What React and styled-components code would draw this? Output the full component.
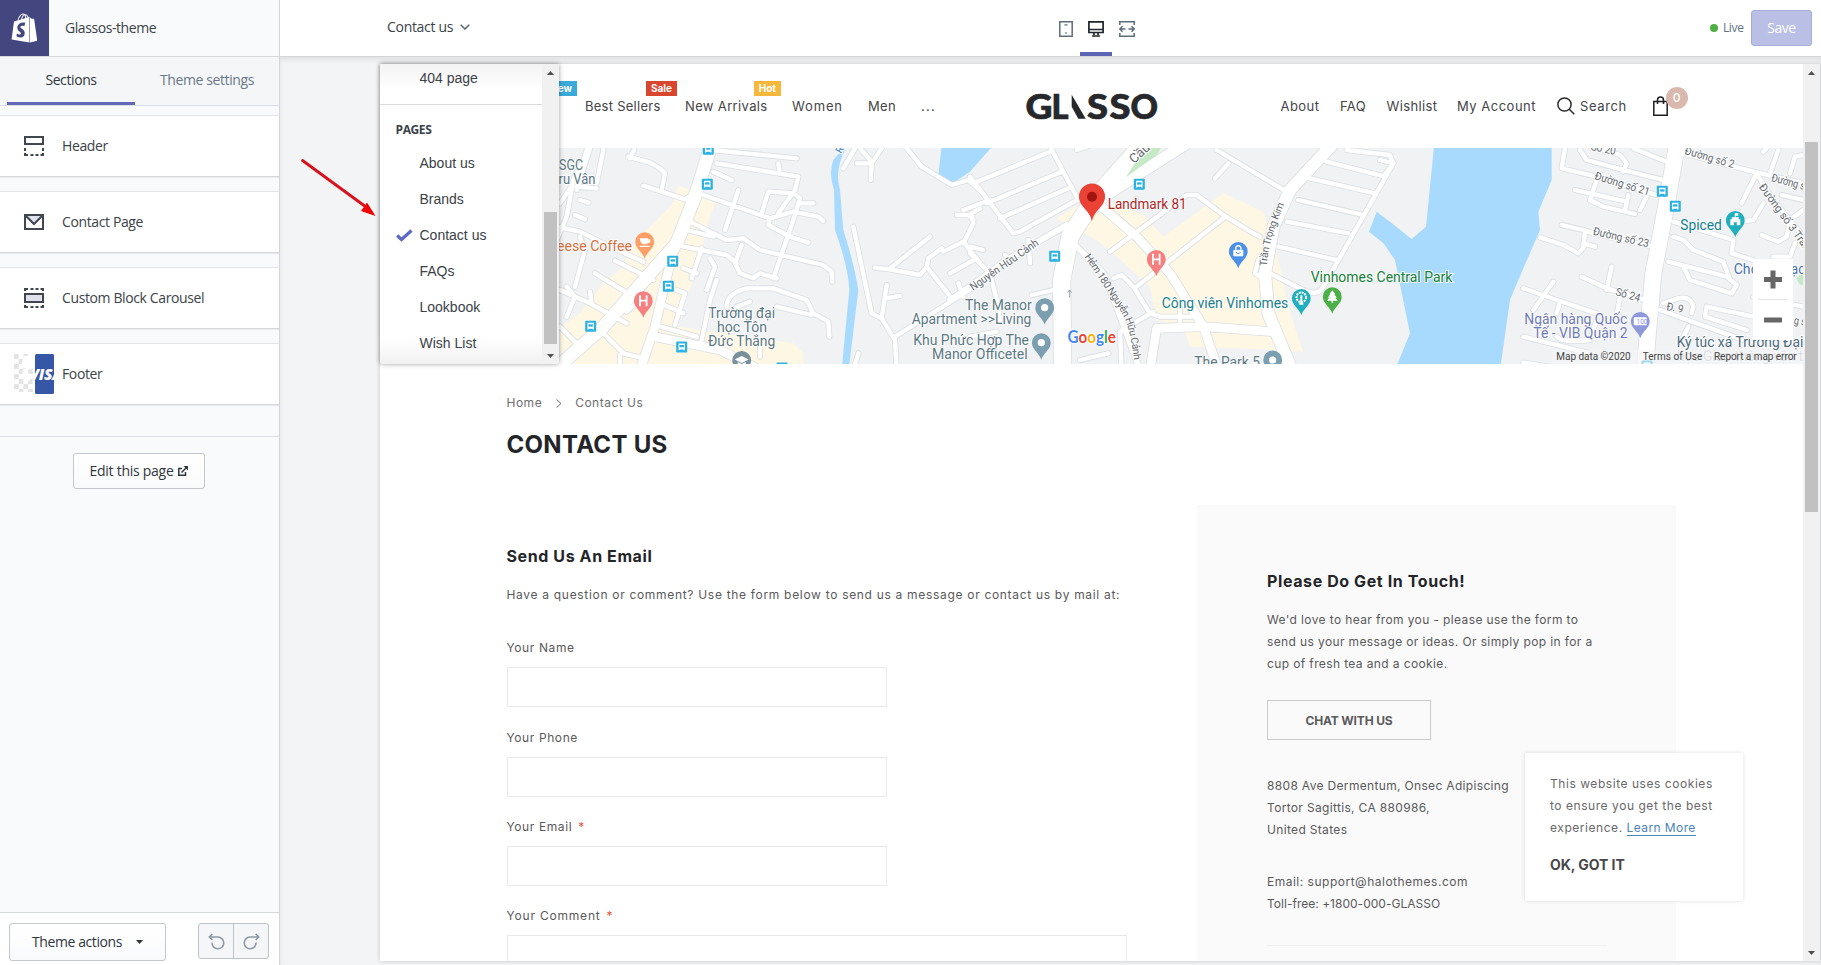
import React from "react";
import styled, { createGlobalStyle } from "styled-components";
import { FaShopify } from "react-icons/fa";

const ui = `"Open Sans", "Noto Sans", sans-serif`;
const shop = `Inter, Lato, sans-serif`;

const Global = createGlobalStyle`
  * { box-sizing: border-box; }
  body { margin: 0; background: #f4f6f8; overflow: hidden; }
  button { font: inherit; padding: 0; margin: 0; cursor: pointer; }
  h1, h2, p, ul { margin: 0; padding: 0; }
`;

/* ---------- editor shell ---------- */

const Shell = styled.div`
  display: grid;
  grid-template-columns: 280px 1fr;
  grid-template-rows: 965px;
  width: 1821px;
  height: 965px;
  overflow: hidden;
  font: 14px/20px ${ui};
  letter-spacing: -0.38px;
  color: #3b4248;
`;
const Sidebar = styled.aside`
  display: flex;
  flex-direction: column;
  border-right: 1px solid #d3d6da;
  background: #f9fafc;
`;
const Brand = styled.div`
  display: flex;
  align-items: center;
  gap: 16px;
  height: 57px;
  border-bottom: 1px solid #d6d8dc;
  letter-spacing: -0.43px;
`;
const BrandMark = styled.div`
  display: grid;
  place-items: center;
  width: 49px;
  height: 56px;
  background: #43467f;
  color: #fff;
  svg { width: 27px; height: 30px; }
`;
const Tabs = styled.div`
  display: flex;
  height: 49px;
  padding-left: 7px;
  background: #f4f6f8;
  border-bottom: 1px solid #d9dfe8;
`;
const Tab = styled.button`
  flex: none;
  width: ${(p) => p.$w}px;
  height: 48px;
  border: 0;
  border-bottom: 3px solid ${(p) => (p.$on ? "#6369b5" : "transparent")};
  background: none;
  letter-spacing: -0.4px;
  color: ${(p) => (p.$on ? "#31373d" : "#6b7885")};
`;
const Cards = styled.div`
  display: flex;
  flex-direction: column;
  gap: 14px;
  padding: 9px 0 31px;
  border-bottom: 1px solid #dcdfe4;
`;
const Card = styled.div`
  display: flex;
  align-items: center;
  gap: 8px;
  height: 62px;
  padding-left: 14px;
  background: #fff;
  border-top: 1px solid #e3e5e9;
  border-bottom: 1px solid #d5d7da;
  box-shadow: 0 1px 1px rgba(0, 0, 0, 0.06);
`;
const Thumb = styled.div`
  display: grid;
  place-items: center;
  width: 40px;
  height: 40px;
`;
const EditWrap = styled.div`
  display: flex;
  justify-content: center;
  flex: 1;
  padding: 16px 1px 0 0;
`;
const EditorButton = styled.button`
  display: flex;
  align-items: center;
  justify-content: center;
  gap: ${(p) => p.$gap}px;
  width: ${(p) => p.$w}px;
  height: ${(p) => p.$h}px;
  border: 1px solid #c3c8cf;
  border-radius: 3px;
  background: linear-gradient(#fff, #f9fafb);
  letter-spacing: ${(p) => p.$ls}px;
  color: #31373d;
`;
const Footer = styled.div`
  display: flex;
  justify-content: space-between;
  height: 53px;
  padding: 10px 10px 0 9px;
  background: #fff;
  border-top: 1px solid #d5d8dc;
`;
const History = styled.div`
  display: flex;
  width: 71px;
  height: 36px;
  border: 1px solid #bcc3cc;
  border-radius: 3px;
  background: #f4f6f8;
`;
const HistoryButton = styled.button`
  flex: 1;
  display: grid;
  place-items: center;
  border: 0;
  background: none;
  & + & { border-left: 1px solid #bcc3cc; }
`;

const Workspace = styled.div`
  display: flex;
  flex-direction: column;
  min-width: 0;
  min-height: 0;
`;
const TopBar = styled.div`
  display: grid;
  grid-template-columns: 778px 1fr auto;
  flex: none;
  height: 57px;
  padding: 0 9px 0 0;
  background: #fff;
  border-bottom: 1px solid #d3d5d8;
`;
const PagePicker = styled.div`
  display: flex;
  align-items: center;
  gap: 7px;
  height: 54px;
  padding-left: 107px;
  letter-spacing: -0.3px;
`;
const Devices = styled.div`
  display: flex;
  margin-left: -7px;
`;
const Device = styled.button`
  display: grid;
  place-items: center;
  width: ${(p) => p.$w}px;
  height: 56px;
  padding-top: 5px;
  border: 0;
  border-bottom: 4px solid ${(p) => (p.$on ? "#5c64b4" : "transparent")};
  background: none;
`;
const SaveArea = styled.div`
  display: flex;
  align-items: center;
  height: 56px;
`;
const Live = styled.span`
  display: flex;
  align-items: center;
  gap: 5px;
  margin-right: 7.5px;
  font-size: 12px;
  color: #5c7480;
  &::before {
    content: "";
    width: 8px;
    height: 8px;
    border-radius: 50%;
    background: #50b043;
  }
`;
const Save = styled.button`
  width: 61px;
  height: 36px;
  border: 1px solid #a7aedf;
  border-radius: 3px;
  background: #babfe6;
  color: #fff;
  letter-spacing: -0.5px;
`;
const Stage = styled.div`
  position: relative;
  flex: 1;
  display: flex;
  min-height: 0;
  padding: 7px 1px 4px 100px;
  background: #f3f4f6;
  box-shadow: inset 0 3px 5px rgba(0, 0, 0, 0.08);
`;
const Preview = styled.div`
  flex: 1;
  display: flex;
  min-width: 0;
  min-height: 0;
  background: #fff;
  box-shadow: 0 0 4px rgba(0, 0, 0, 0.22);
`;
const Page = styled.div`
  width: 1423px;
  overflow: hidden;
  font: 12px/22px ${shop};
  letter-spacing: 0;
  color: #59595b;
`;

/* ---------- scrollbars ---------- */

const Track = styled.div`
  display: flex;
  flex-direction: column;
  align-items: center;
  width: 17px;
  background: #f1f1f1;
`;
const ArrowBox = styled.div`
  display: grid;
  place-items: center;
  height: 17px;
  width: 17px;
`;
const Grip = styled.div`
  width: 13px;
  margin-top: ${(p) => p.$top}px;
  margin-bottom: auto;
  height: ${(p) => p.$h}px;
  background: #c1c1c1;
`;
const Scrollbar = ({ top, height }) => (
  <Track>
    <ArrowBox><svg width="7" height="4"><path d="M0 4 3.500 0 7 4Z" fill="#505050" /></svg></ArrowBox>
    <Grip $top={top} $h={height} />
    <ArrowBox><svg width="7" height="4"><path d="M0 0 3.500 4 7 0Z" fill="#505050" /></svg></ArrowBox>
  </Track>
);

/* ---------- page menu ---------- */

const Menu = styled.div`
  position: absolute;
  left: 100px;
  top: 7px;
  display: flex;
  width: 179px;
  height: 300px;
  background: #fff;
  border-radius: 0 0 3px 3px;
  box-shadow: 0 0 5px rgba(0, 0, 0, 0.38);
  font: 14px/36px "Liberation Sans", Arial, sans-serif;
  letter-spacing: 0;
  overflow: hidden;
`;
const MenuList = styled.div`
  flex: 1;
  background: linear-gradient(#f3f3f4, #fff 26px, #fff 274px, #f1f1f2);
`;
const MenuItem = styled.div`
  display: flex;
  align-items: center;
  height: 36px;
  padding-left: 16px;
`;
const MenuTop = styled(MenuItem)`
  height: 41px;
  padding-bottom: 12px;
  border-bottom: 1px solid #d8dadd;
`;
const MenuMark = styled.span`
  display: flex;
  width: 23.5px;
`;
const MenuTitle = styled.div`
  padding: 16px 0 6px 15.5px;
  font: 700 12px/18px ${ui};
  letter-spacing: -0.38px;
`;

/* ---------- storefront ---------- */

const StoreHeader = styled.header`
  position: relative;
  display: grid;
  grid-template-columns: 647px 253.5px 1fr;
  align-items: center;
  height: 84px;
  background: #fff;
  box-shadow: 0 1px 3px rgba(0, 0, 0, 0.15);
  font-size: 13px;
`;
const Nav = styled.nav`
  display: flex;
  align-items: center;
  gap: ${(p) => p.$gap}px;
  padding-left: ${(p) => p.$pl}px;
`;
const NavItem = styled.span`
  position: relative;
  width: ${(p) => p.$w}px;
  white-space: nowrap;
  letter-spacing: ${(p) => p.$ls}px;
  color: #444446;
`;
const Tag = styled.span`
  position: absolute;
  right: -${(p) => p.$out}px;
  top: -14px;
  height: 15px;
  padding: 0 5px;
  font: 700 10px/15px ${shop};
  letter-spacing: 0;
  color: #fff;
  background: ${(p) => p.$c};
`;
const Bag = styled.span`
  position: relative;
  display: flex;
  margin-left: 5px;
`;
const Count = styled.span`
  position: absolute;
  left: 13px;
  top: -9px;
  width: 22px;
  height: 22px;
  border-radius: 50%;
  background: #d9b9ad;
  color: #fff;
  font: 500 12px/22px ${shop};
  text-align: center;
`;
const SearchIcon = styled.span`
  display: flex;
  margin-right: -15px;
`;

const MapBox = styled.div`
  position: relative;
  height: 216px;
  background: #f0f2f4;
  svg { display: block; }
`;
const ZoomBox = styled.div`
  position: absolute;
  left: 1373px;
  top: 111px;
  width: 40px;
  height: 81px;
  background: #fff;
`;

const Content = styled.main`padding: 29px 127px 0 126.5px;`;
const Crumbs = styled.div`
  display: flex;
  align-items: center;
  gap: 13.5px;
  line-height: 20px;
  letter-spacing: 0.5px;
  color: #6e6e70;
`;
const Title = styled.h1`
  margin-top: 17px;
  font-size: 24px;
  line-height: 30px;
  letter-spacing: 0.3px;
  color: #232529;
`;
const Columns = styled.div`
  display: grid;
  grid-template-columns: 620px 479px;
  gap: 70.5px;
  margin-top: 45px;
`;
const Form = styled.section`padding-top: 39px;`;
const Heading = styled.h2`
  font-size: 16px;
  line-height: 24px;
  letter-spacing: 0.6px;
  white-space: nowrap;
  color: #232529;
`;
const Text = styled.p`
  margin-top: ${(p) => p.$mt}px;
  letter-spacing: ${(p) => p.$ls}px;
  white-space: nowrap;
`;
const Field = styled.div`
  display: flex;
  flex-direction: column;
  gap: 9px;
  margin-top: ${(p) => p.$mt}px;
`;
const Label = styled.label`
  line-height: 20px;
  letter-spacing: ${(p) => p.$ls || 0.6}px;
  em { margin-left: 6px; color: #e5533d; font-style: normal; }
`;
const Input = styled.div`
  width: ${(p) => p.$w}px;
  height: ${(p) => p.$h}px;
  border: 1px solid #e9e9e9;
  background: #fff;
`;
const Panel = styled.aside`
  height: 456px;
  padding: 64px 69px 0 70px;
  background: #fafafa;
`;
const Chat = styled.button`
  width: 164px;
  height: 40px;
  margin-top: 25px;
  padding-top: 2px;
  border: 1px solid #cbcbcb;
  background: none;
  font: 700 12px/20px ${shop};
  letter-spacing: -0.16px;
  color: #5a5a5c;
`;
const Rule = styled.div`
  margin-top: 30px;
  height: 1px;
  background: #f1f1f1;
`;
const Cookie = styled.div`
  position: absolute;
  left: 1245px;
  top: 696px;
  width: 218px;
  height: 148px;
  padding: 20px 25px;
  border-radius: 2px;
  background: rgba(255, 255, 255, 0.96);
  box-shadow: 0 0 4px rgba(0, 0, 0, 0.13);
  font: 12px/22px ${shop};
  letter-spacing: ${0.55}px;
  white-space: nowrap;
  color: #68686a;
  a { letter-spacing: 0.4px; color: #4a84b8; border-bottom: 1px solid #4a84b8; }
  strong { display: block; margin-top: 15px; font-size: 14px; letter-spacing: -0.05px; color: #47474a; }
`;
const Pointer = styled.svg`
  position: absolute;
  left: 20px;
  top: 98px;
`;

/* ---------- icons ---------- */

const HeaderIcon = () => (
  <svg width="20" height="20" fill="none" stroke="#41474e" strokeWidth="2">
    <path d="M1 1h18v7H1z" fill="#fff" />
    <path d="M1 12v3M19 12v3" />
    <path d="M1 17v2h3M6.500 19h3M11.500 19h3M16.500 19H19v-2" />
  </svg>
);
const MailIcon = () => (
  <svg width="20" height="16" fill="none" stroke="#41474e" strokeWidth="2">
    <path d="M2 2l8 8 8-8Z" fill="#dfe1ec" stroke="none" />
    <path d="M1 1h18v14H1zM2 2l8 8 8-8" />
  </svg>
);
const BlockIcon = () => (
  <svg width="20" height="20" fill="none" stroke="#41474e" strokeWidth="2">
    <path d="M1 3V1h3M6.500 1h3M11.500 1h3M16.500 1H19v2M1 17v2h3M6.500 19h3M11.500 19h3M16.500 19H19v-2" />
    <path d="M1 6h18v8H1z" fill="#dfe1ec" />
  </svg>
);
const FooterThumb = () => (
  <svg width="40" height="40">
    <defs>
      <pattern id="check" width="9.4" height="10" patternUnits="userSpaceOnUse">
        <path d="M0 0h4.7v5H0zM4.7 5h4.7v5H4.7z" fill="#e4e4e4" />
      </pattern>
      <clipPath id="visa"><rect x="21" width="19" height="40" rx="1.5" /></clipPath>
    </defs>
    <rect width="19" height="38" fill="url(#check)" />
    <path d="M10 2h9v12l-5 2-7-4zM8 17l8 3v7l-7-3z" fill="#fff" />
    <rect x="21" width="19" height="40" rx="1.5" fill="#3656a6" />
    <text x="15.500" y="25.500" clipPath="url(#visa)" fill="#fff" fontFamily="Open Sans" fontWeight="800" fontStyle="italic" fontSize="16" textLength="33" lengthAdjust="spacingAndGlyphs">VISA</text>
  </svg>
);
const ExternalIcon = () => (
  <svg width="10" height="10" fill="none" stroke="#31373d" strokeWidth="1.500">
    <path d="M4 2.500H.8v6.700h6.700V6M3.500 6.500 8.500 1.500" />
    <path d="M5.500 0H10v4.500Z" fill="#31373d" stroke="none" />
  </svg>
);
const UndoIcon = ({ flip }) => (
  <svg width="17" height="17" viewBox="0 0 17 17" fill="none" stroke="#8d9aa8" strokeWidth="1.600">
    <path transform={flip ? "matrix(-1 0 0 1 17 0)" : undefined} d="M1.300 4H10A5.900 5.900 0 1 1 4 9.600M4.300 1 1.300 4l3 3" />
  </svg>
);
const TabletIcon = () => (
  <svg width="14" height="16" fill="none" stroke="#5f6e7b" strokeWidth="1.500">
    <path d="M.8.8h12.400v14.400H.8z" />
    <path d="M5.500 3.800h3M6.300 12h1.400" strokeWidth="1.300" />
  </svg>
);
const DesktopIcon = () => (
  <svg width="16" height="16" fill="none" stroke="#1f262d" strokeWidth="1.700">
    <path d="M.9.9h14.200v10.600H.9zM1 8.500h14M6 11.500v2.500M10 11.500v2.500M4 15h8" />
  </svg>
);
const WideIcon = () => (
  <svg width="16" height="16" fill="none" stroke="#5f6e7b" strokeWidth="1.500">
    <path d="M.8 4V.8h14.400V4M.8 12v3.200h14.400V12M1 8h5.500M9.500 8H15M3.500 5.300.9 8l2.600 2.700M12.500 5.300 15.100 8l-2.600 2.700" />
  </svg>
);

const LogoMark = styled.svg`
  overflow: visible;
`;
const Logo = () => (
  <LogoMark width="130" height="28" viewBox="1027 91.500 130 28" fill="#26282b" fontFamily="Lato" fontWeight="900" fontSize="34">
    {[["G", 1025.500, 27], ["L", 1051.500, 17], ["S", 1087, 21], ["S", 1109.500, 21], ["O", 1130.500, 27.500]].map(([c, x, w]) => (
      <text key={x} x={x} y="118" textLength={w} lengthAdjust="spacingAndGlyphs" stroke="#26282b" strokeWidth=".7">{c}</text>
    ))}
    <path d="M1071.700 94.300 1085.700 118.200h-7.400l-6.600-12z" />
  </LogoMark>
);

/* ---------- map ---------- */

const west = "translate(560 140) scale(.33333)";
const mid = "translate(970 140) scale(.33333)";
const east = "translate(1390 140) scale(.33333)";

const roads = [
  [west, 13, "M210 55 222 30M205 50 270 68 300 85 315 100 306 145M250 137 375 178 395 165M0 262 60 275 150 320 250 365M70 60 40 120 20 230-10 300M90 25 50 150M130 30 110 130M50 140 110 145M60 180 85 188M45 225 75 238M0 190 60 100 80 30M60 290 75 330 45 440M165 362 280 420M105 400 195 455"],
  [west, 13, "M455 30 710 55M470 70 715 110 705 150 655 220M655 70 658 95M460 95 515 120M430 165 630 235 700 215 775 230 790 243M535 150 495 270M605 220 625 155 700 160 720 175 700 240 640 415M720 190 760 190M630 235 625 255 690 290 745 308M390 245 500 300 550 295 600 330 790 375 815 395 817 425M380 270 460 290M370 320 500 345 530 370M545 315 525 370 540 400 580 415 600 400 650 415M425 325 395 415M450 355 465 380 440 450M370 385 410 400M470 420 450 480 425 600M350 450 375 460 345 555"],
  [west, 13, "M500 500Q500 460 560 445L640 445 740 480 760 520 805 545 808 590M650 500 755 525M300 490 370 520M285 555 410 590M530 500 570 485M880 260 935 520 965 535 1005 600 1010 690M980 435 965 535M975 475 1020 468M895 640 880 690M1005 590 1180 480 1260 430M945 383 990 388 1080 405 1100 380 1175 475M990 385 1110 290M1100 380 1105 355 1145 325M1150 335 1210 305 1260 370M1190 225 1235 225 1240 250 1215 300M1170 400 1250 355M1260 205 1235 220M1195 430 1210 470M1040 25 1085 80 1175 135 1225 120 1260 150M885 25 850 85M890 70 935 70 965 25M935 70 932 120M900 25 935 65M0 450 90 490 200 550M90 455 95 490M20 440 45 470 20 530M0 560 60 620M120 570 190 640 250 655M180 645 180 690M200 515 240 480M600 650 600 620"],
  [mid, 13, "M10 130 240 35M50 190 275 95M90 235 305 140M0 110 130 280 150 275 330 175M-20 210 60 180M240 20 325 180M0 320 40 330M0 340 60 400 80 480 90 540M0 230 10 240M175 300 180 370M105 345 115 360M185 465 250 450M0 590 80 575M330 660 415 640M430 415 455 405 490 440 540 520 570 530 690 530M550 515 450 575 455 690M500 440 550 400 760 235M630 505 630 545M420 335 650 165 680 165 760 225 850 280 870 290M740 30 950 155M775 70 735 115M320 30 350 20"],
  [mid, 13, "M1130 30 1260 45 1270 70 1060 440Q1045 470 1000 450L900 400M1070 65 1245 110M1020 115 1215 160M985 180 1180 225M950 245 1135 280M925 320 1100 360M865 360 855 400 885 420"],
  [east, 13, "M525 25 515 85 600 105 800 165M570 30 590 60 700 90 820 120M610 20 690 45 710 70 700 95M730 25 830 65M555 150 600 160 710 185M620 120 600 180 640 200 735 222M715 165 705 210M770 170 750 210M515 255 580 270 610 280 790 320M450 292 520 315 565 340 580 325 585 275M580 310 615 320M665 380 650 450M575 410 650 445 800 490M400 445 500 480 620 520M490 425 430 510M510 485 500 520M400 590 600 640M690 470 680 530M400 668 480 680M500 590Q520 610 600 600L620 540M-30 60 10 70-20 110"],
  [east, 13, "M880 40 1090 95 1240 130M1165 30 1140 100M1200 100 1215 50 1240 45M1120 35 1130 25M1100 100 1055 190M1105 110 1150 180 1240 290M1175 165 1240 180M1120 190 1090 240 1050 245M850 245 1030 300 1025 340 1090 360M850 290 880 300 910 330 1000 365 1020 420M835 365 1010 410 1040 435 1025 460 900 420 880 380M1115 285 1165 305 1190 290 1200 240 1240 210M1150 350 1200 350 1215 310M820 490 850 480Q900 460 910 500L905 520M810 510 920 550 1060 600M950 500 1090 530M950 500 945 530 1070 570M1090 470 1240 500M895 560 880 590"],
  [mid, 17, "M-60 480 0 440 110 360 290 255M320 320 400 400 440 500 510 690"],
  [west, 26, "M345 320 315 430 285 560 240 690M285 590 480 630 600 690"],
  [mid, 26, "M395 200 500 290 600 400 700 560 745 690M540 690 560 565 700 560 910 575"],
  [mid, 36, "M1090 10 960 150 910 260 885 400 895 520 965 690"],
  [west, 38, "M455 10 405 170 350 310 130 560-40 710"],
  [mid, 52, "M530 0 370 180 300 290 275 420 278 700"],
  [mid, 34, "M650 10 400 170 330 250"],
  [east, 48, "M862 10 832 180 790 400 763 700"],
];

const Pin = ({ x, y, c, children }) => (
  <g transform={`translate(${x} ${y})`}>
    <path d="M0 17C-2 10-9.400 7-9.400 0A9.400 9.400 0 1 1 9.400 0C9.400 7 2 10 0 17Z" fill={c} />
    {children || <circle r="3.600" fill="#fff" />}
  </g>
);
const Hospital = () => <path d="M-3.300-5.500V5.500M3.300-5.500V5.500M-3.300 0H3.300" stroke="#fff" strokeWidth="1.800" />;
const stops = [[708.300, 149.300], [707.300, 184.300], [672.700, 261.300], [668.300, 286.300], [590.700, 326.300], [681.700, 347], [782, 368], [1139.300, 184.300], [1054.700, 256.300], [1662.300, 191.300], [1675.300, 206.300], [1647, 366]];
const Stop = ({ at }) => (
  <g transform={`translate(${at[0]} ${at[1]})`}>
    <rect x="-5.500" y="-5.500" width="11" height="11" rx="1" fill="#2cb1e1" />
    <path d="M-3.200-3.500H3.200V3.300H2V2.500H-2V3.300H-3.200Z" fill="#fff" />
    <path d="M-2.200-2H2.200V.3H-2.200Z" fill="#2cb1e1" />
  </g>
);

const slate = "#5b7883";
/* text, x, baseline, length, colour */
const places = [
  ["SGC", 559, 170, 24, slate], ["ru Vân", 558.500, 184, 37, slate], ["Cheese Coffee", 540, 251, 92, "#d4703f"],
  ["Trường đại", 708.300, 318, 66.700, slate], ["học Tôn", 717, 332, 50, slate], ["Đức Thắng", 708, 346, 67.300, slate],
  ["The Manor", 965, 310, 66.700, slate], ["Apartment >>Living", 911.700, 324.300, 119.600, slate],
  ["Khu Phức Hợp The", 913.300, 345, 115.700, slate], ["Manor Officetel", 932, 359, 95.700, slate],
  ["Landmark 81", 1107.700, 209, 79, "#b0261f"], ["Công viên Vinhomes", 1161.700, 308, 126.600, "#1a7f8e"],
  ["Vinhomes Central Park", 1310.700, 282, 141.600, "#188038"], ["The Park 5", 1194.300, 367, 65.700, slate],
  ["Spiced", 1680.300, 230, 41.400, "#12808f"], ["Ngân hàng Quốc", 1524.300, 324, 103, "#6f7bb5"],
  ["Tế - VIB Quận 2", 1533.300, 338, 94.400, "#6f7bb5"], ["Chợ", 1733.700, 274, 25, "#4a72b0"], ["ạc", 1791, 274, 14, "#4a72b0"],
  ["Ký túc xá Trường Đại", 1676.700, 347, 126.600, "#4f6b7c"], ["học Giao thông vận t", 1677, 361, 126, "#b9c1c7"],
];
/* text, x, y, length, angle */
const streets = [
  ["Nguyễn Hữu Cảnh", 973, 291, 81, -35], ["Số 20", 1590.500, 150, 25, 11], ["Đường số 21", 1594, 179, 57, 17],
  ["Đường số 2", 1684, 154, 51, 16], ["Đường số", 1770.700, 181, 40, 15], ["Đường số 3 Trần", 1758.500, 187, 80, 54],
  ["Đường số 23", 1592.500, 234.500, 57, 13], ["Số 24", 1615, 295, 25, 16], ["Đ. 9", 1666, 310, 17, 10],
  ["g s", 1793.500, 324, 12, 8],
];

const CityMap = () => (
  <svg width="1423" height="216" viewBox="380 148 1423 216" fontFamily="Roboto">
    <defs>
      <path id="alley" d="M343 350C390 420 410 450 440 495S480 560 496 690" />
      <path id="avenue" d="M890 380C895 310 915 260 945 187" />
    </defs>
    <g fill="#fef7e4">
      <path transform={west} d="M355 135 420 165 465 190 440 260 410 400 380 470 355 560 560 590 700 610 730 640V690H0V560L60 520 130 430 180 390 230 300 340 190Z" />
      <path transform={mid} d="M260 235 340 185 400 180 520 225 580 290 760 160 880 215 930 380 960 520 1000 635 800 625 660 620 640 560 560 540 540 440 430 340 380 300Z" />
    </g>
    <path transform={mid} d="M540 230 660 180 690 200 580 290Z" fill="#f0f2f4" />
    <g fill="#a8dafd">
      <path transform={west} d="M855 20 820 60Q805 100 822 150L825 270Q865 380 868 450L845 690H866L895 450Q882 370 850 270L840 150Q822 90 858 24Z" />
      <path transform={west} d="M1145 20H1296L1230 95 1175 132 1135 105Z" />
      <path transform={east} d="M132 20H485V120L445 215 450 270 385 420 360 480 330 690H15L60 580 15 360-20 310-63 275-40 215 0 245 65 297 108 260Z" />
    </g>
    <g fill="none" strokeLinejoin="round" strokeLinecap="round">
      <g stroke="#dcdfe3">
        {roads.map(([t, w, d], i) => <path key={i} transform={t} d={d} strokeWidth={w + 5} />)}
      </g>
      <g stroke="#fff">
        {roads.map(([t, w, d], i) => <path key={i} transform={t} d={d} strokeWidth={w} />)}
      </g>
    </g>
    <path transform={mid} d="M525 20H575L560 45 468 112Z" fill="#c5e8c5" />
    <path transform={east} d="M1220 415q10-15 25-10v30q-20 5-25-20" fill="#c5e8c5" />
    <path transform={mid} d="M299 473V450M293 458 299 450 305 458" stroke="#9aa0a6" strokeWidth="3" fill="none" />
    {stops.map((s) => <Stop key={s.join()} at={s} />)}

    <g fill="#62686e" fontSize="11" stroke="#fff" strokeWidth="2" paintOrder="stroke">
      {streets.map(([t, x, y, w, a]) => (
        <text key={t} transform={`translate(${x} ${y}) rotate(${a})`} textLength={w} lengthAdjust="spacingAndGlyphs">{t}</text>
      ))}
      <text transform="translate(1134 164) rotate(-42)" fontSize="13">Cầu</text>
      <text transform="translate(841 154) rotate(-60)" fill="#3b78c9" fontSize="10">Rạ</text>
      <g transform={mid} fontSize="31" strokeWidth="5">
        <text><textPath href="#alley" textLength="350">Hẻm 180 Nguyễn Hữu Cảnh</textPath></text>
        <text><textPath href="#avenue" textLength="196">Trần Trọng Kim</textPath></text>
      </g>
    </g>

    <Pin x={644.700} y={241.700} c="#ff9e67"><path d="M-5-3.500H3.500V-2.500H5.500V1H3.300Q2.500 2.500 0 2.500-4.500 2.500-5-3.500ZM-5 4H5V5.200H-5Z" fill="#fff" /></Pin>
    <Pin x={643.300} y={300.700} c="#f5807f"><Hospital /></Pin>
    <Pin x={741.700} y={360.500} c="#78909c"><path d="M-7-1 0-4.500 7-1 0 2.500ZM-4 1.500V5H4V1.500L0 3.500Z" fill="#fff" /></Pin>
    <Pin x={1156.300} y={259.300} c="#f5807f"><Hospital /></Pin>
    <Pin x={1238.300} y={251.300} c="#4a90e8"><path d="M-4.500-1H4.500V4.500H-4.500Z" fill="#fff" stroke="#fff" /><path d="M-2.500-1.500V-3a2.500 2.500 0 0 1 5 0v1.500" fill="none" stroke="#fff" strokeWidth="1.400" /><path d="M-2.200.8Q0 4 2.200.8" fill="none" stroke="#4a90e8" /></Pin>
    <Pin x={1301.300} y={298.300} c="#22afbd"><circle r="4.800" cy="-1" fill="none" stroke="#fff" strokeWidth="2" strokeDasharray="2 .8" /><path d="M0 6V-3M-2 5.500H2" stroke="#fff" strokeWidth="2" /></Pin>
    <Pin x={1332.300} y={296.700} c="#4caf47"><path d="M0-6.500 3-2.500H2L4.500 1H3L5.500 4H.8V6H-.8V4H-5.500L-3 1H-4.500L-2-2.500H-3Z" fill="#fff" /></Pin>
    <Pin x={1044.700} y={307.700} c="#7b9eb0" />
    <Pin x={1041.300} y={342.700} c="#7b9eb0" />
    <Pin x={1272.700} y={360} c="#7b9eb0" />
    <Pin x={1735.300} y={220.300} c="#22afbd"><path d="M-5 5V-1H-3.500V-3H-.6V-7H3V-4.500H.5V-3H3.500V-1H5V5H1.500V2H-1.500V5Z" fill="#fff" /></Pin>
    <Pin x={1640.300} y={321.300} c="#8f98da"><rect x="-6.500" y="-4" width="13" height="8" rx="1" fill="#fff" /><text x="-3.800" y="3" fontSize="6.500" fill="#8f98da">100</text></Pin>
    <path d="M1092 221.500C1090 210 1079 207 1079 196.500A13 13 0 1 1 1105 196.500C1105 207 1094 210 1092 221.500Z" fill="#ea4335" />
    <circle cx="1092" cy="196.700" r="5" fill="#a31512" />

    <g fontSize="14" stroke="#fff" strokeWidth="2" strokeOpacity=".85" paintOrder="stroke">
      {places.map(([t, x, y, w, c]) => (
        <text key={t} x={x} y={y} fill={c} textLength={w} lengthAdjust="spacingAndGlyphs">{t}</text>
      ))}
    </g>
    <text x="1067.500" y="342.700" fontFamily="Lato" fontWeight="700" fontSize="16.500" textLength="48.500" lengthAdjust="spacingAndGlyphs" stroke="#fff" strokeWidth="2" paintOrder="stroke">
      <tspan fill="#4285f4">G</tspan><tspan fill="#ea4335">o</tspan><tspan fill="#f4b400">o</tspan><tspan fill="#4285f4">g</tspan><tspan fill="#34a853">l</tspan><tspan fill="#ea4335">e</tspan>
    </text>
    <rect x="1552" y="350" width="251" height="14" fill="#f5f5f5" opacity=".6" />
    <g fontSize="10" fill="#444">
      <text x="1556.300" y="360" textLength="74.400">Map data ©2020</text>
      <text x="1642.700" y="360" textLength="59.500">Terms of Use</text>
      <text x="1714" y="360" textLength="82.700">Report a map error</text>
    </g>
  </svg>
);

/* ---------- data ---------- */

const sections = [
  ["Header", <HeaderIcon />], ["Contact Page", <MailIcon />],
  ["Custom Block Carousel", <BlockIcon />], ["Footer", <FooterThumb />],
];
const pages = ["About us", "Brands", "Contact us", "FAQs", "Lookbook", "Wish List"];

export default function App() {
  return (
    <Shell>
      <Global />
      <Sidebar>
        <Brand><BrandMark><FaShopify /></BrandMark>Glassos-theme</Brand>
        <Tabs>
          <Tab $w={128} $on>Sections</Tab>
          <Tab $w={144}>Theme settings</Tab>
        </Tabs>
        <Cards>
          {sections.map(([name, icon]) => (
            <Card key={name}><Thumb>{icon}</Thumb>{name}</Card>
          ))}
        </Cards>
        <EditWrap>
          <EditorButton $w={132} $h={36} $gap={5} $ls={-0.27}>Edit this page<ExternalIcon /></EditorButton>
        </EditWrap>
        <Footer>
          <EditorButton $w={157} $h={38} $gap={14} $ls={-0.4}>
            Theme actions
            <svg width="7" height="4"><path d="M0 0H7L3.500 4Z" fill="#31373d" /></svg>
          </EditorButton>
          <History>
            <HistoryButton><UndoIcon /></HistoryButton>
            <HistoryButton><UndoIcon flip /></HistoryButton>
          </History>
        </Footer>
      </Sidebar>

      <Workspace>
        <TopBar>
          <PagePicker>
            Contact us
            <svg width="10" height="6" fill="none" stroke="#5b6670" strokeWidth="1.500"><path d="M.7.7 5 5 9.300.7" /></svg>
          </PagePicker>
          <Devices>
            <Device $w={29}><TabletIcon /></Device>
            <Device $w={32} $on><DesktopIcon /></Device>
            <Device $w={30}><WideIcon /></Device>
          </Devices>
          <SaveArea>
            <Live>Live</Live>
            <Save>Save</Save>
          </SaveArea>
        </TopBar>

        <Stage>
          <Preview>
            <Page>
              <StoreHeader>
                <Nav $pl={140} $gap={25}>
                  <NavItem $w={40} $ls={0.7}>Shop<Tag $c="#3aabd8" $out={17}>New</Tag></NavItem>
                  <NavItem $w={75} $ls={0.26}>Best Sellers<Tag $c="#d8462d" $out={17}>Sale</Tag></NavItem>
                  <NavItem $w={82} $ls={0.35}>New Arrivals<Tag $c="#f7b73b" $out={14}>Hot</Tag></NavItem>
                  <NavItem $w={51} $ls={0.85}>Women</NavItem>
                  <NavItem $w={28} $ls={0.33}>Men</NavItem>
                  <NavItem $w={14} $ls={1.3}>...</NavItem>
                </Nav>
                <Logo />
                <Nav $pl={0} $gap={20.500}>
                  <NavItem $w={39} $ls={0.45}>About</NavItem>
                  <NavItem $w={26} $ls={0.35}>FAQ</NavItem>
                  <NavItem $w={50} $ls={0.37}>Wishlist</NavItem>
                  <NavItem $w={79} $ls={0.5}>My Account</NavItem>
                  <SearchIcon>
                    <svg width="18" height="18" fill="none" stroke="#2b2b2d" strokeWidth="1.500"><circle cx="7.500" cy="7.500" r="6.600" /><path d="M12.300 12.300 17.300 17.300" /></svg>
                  </SearchIcon>
                  <NavItem $w={47} $ls={0.62}>Search</NavItem>
                  <Bag>
                    <svg width="15" height="20" fill="none" stroke="#1f1f21" strokeWidth="1.500"><path d="M.8 5.500H14.200V19.200H.8ZM4.500 8V4a3 3 0 0 1 6 0V8" /></svg>
                    <Count>0</Count>
                  </Bag>
                </Nav>
              </StoreHeader>
              <MapBox>
                <CityMap />
                <ZoomBox>
                  <svg width="40" height="81" stroke="#666" strokeWidth="5"><path d="M11 20.500H29M20 11.500V29.500M11 61H29" /><path d="M5 40.500H35" stroke="#e6e6e6" strokeWidth="1" /></svg>
                </ZoomBox>
              </MapBox>
              <Content>
                <Crumbs>
                  Home
                  <svg width="6" height="9" fill="none" stroke="#6a6a6c"><path d="M.5.5 5 4.500.5 8.500" /></svg>
                  Contact Us
                </Crumbs>
                <Title>CONTACT US</Title>
                <Columns>
                  <Form>
                    <Heading>Send Us An Email</Heading>
                    <Text $mt={16} $ls={0.69}>Have a question or comment? Use the form below to send us a message or contact us by mail at:</Text>
                    <Field $mt={32}><Label>Your Name</Label><Input $w={380} $h={40} /></Field>
                    <Field $mt={21}><Label>Your Phone</Label><Input $w={380} $h={40} /></Field>
                    <Field $mt={20}><Label>Your Email<em>*</em></Label><Input $w={380} $h={40} /></Field>
                    <Field $mt={20}><Label $ls={0.8}>Your Comment<em>*</em></Label><Input $w={620} $h={120} /></Field>
                  </Form>
                  <Panel>
                    <Heading>Please Do Get In Touch!</Heading>
                    <Text $mt={16} $ls={0.38}>
                      We'd love to hear from you - please use the form to<br />
                      send us your message or ideas. Or simply pop in for a<br />
                      cup of fresh tea and a cookie.
                    </Text>
                    <Chat>CHAT WITH US</Chat>
                    <Text $mt={35} $ls={0.33}>
                      8808 Ave Dermentum, Onsec Adipiscing<br />
                      Tortor Sagittis, CA 880986,<br />
                      United States
                    </Text>
                    <Text $mt={30} $ls={0.5}>Email: support@halothemes.com</Text>
                    <Text $mt={0} $ls={0.02}>Toll-free: +1800-000-GLASSO</Text>
                    <Rule />
                  </Panel>
                </Columns>
              </Content>
            </Page>
            <Scrollbar top={61} height={370} />
          </Preview>

          <Cookie>
            This website uses cookies<br />
            to ensure you get the best<br />
            experience. <a>Learn More</a>
            <strong>OK, GOT IT</strong>
          </Cookie>

          <Menu>
            <MenuList>
              <MenuTop><MenuMark />404 page</MenuTop>
              <MenuTitle>PAGES</MenuTitle>
              {pages.map((p) => (
                <MenuItem key={p}>
                  <MenuMark>
                    {p === "Contact us" && (
                      <svg width="17" height="13" fill="none" stroke="#5c6ac4" strokeWidth="3.200"><path d="M1.200 6.500 5.500 10.500 15.500 1.500" /></svg>
                    )}
                  </MenuMark>
                  {p}
                </MenuItem>
              ))}
            </MenuList>
            <Scrollbar top={131} height={132} />
          </Menu>

          <Pointer width="80" height="66">
            <path d="M2.500 5.500 64 50.500" stroke="#d8121a" strokeWidth="2.800" strokeLinecap="round" />
            <path d="M75.500 61 61 56 67 47.500Z" fill="#f00000" />
          </Pointer>
        </Stage>
      </Workspace>
    </Shell>
  );
}
